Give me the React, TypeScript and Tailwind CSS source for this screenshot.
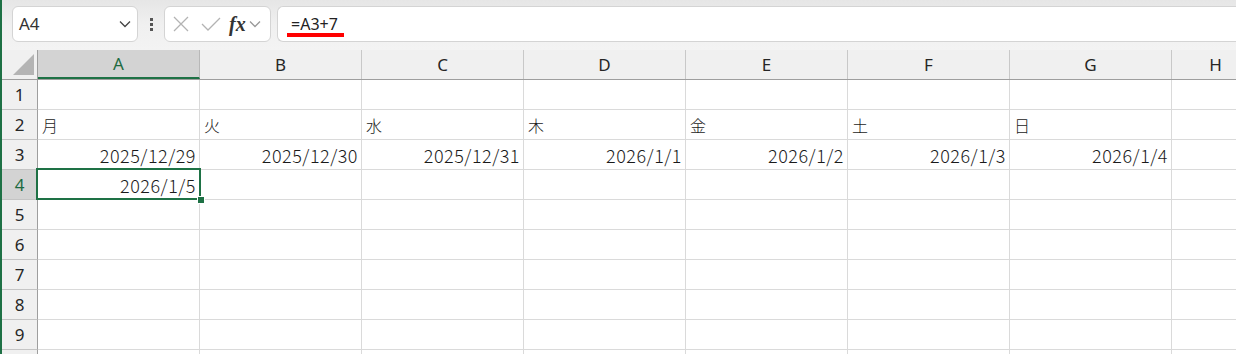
import React from "react";

const cols = ["A", "B", "C", "D", "E", "F", "G", "H"];
type Cell = { t: string; align: "l" | "r" };
const data: Record<number, Record<number, Cell>> = {
  2: {
    0: { t: "月", align: "l" },
    1: { t: "火", align: "l" },
    2: { t: "水", align: "l" },
    3: { t: "木", align: "l" },
    4: { t: "金", align: "l" },
    5: { t: "土", align: "l" },
    6: { t: "日", align: "l" },
  },
  3: {
    0: { t: "2025/12/29", align: "r" },
    1: { t: "2025/12/30", align: "r" },
    2: { t: "2025/12/31", align: "r" },
    3: { t: "2026/1/1", align: "r" },
    4: { t: "2026/1/2", align: "r" },
    5: { t: "2026/1/3", align: "r" },
    6: { t: "2026/1/4", align: "r" },
  },
  4: { 0: { t: "2026/1/5", align: "r" } },
};

const cellFont = { fontFamily: '"Noto Sans CJK JP", "Noto Sans", sans-serif' };

function Chevron({ className }: { className?: string }) {
  return (
    <svg width="12" height="8" viewBox="0 0 12 8" className={className}>
      <path d="M1 1.5 L6 6.5 L11 1.5" fill="none" stroke="currentColor" strokeWidth="1.3" />
    </svg>
  );
}

export default function App() {
  const rows = [1, 2, 3, 4, 5, 6, 7, 8, 9, 10];
  return (
    <div className="w-[1236px] h-[354px] overflow-hidden bg-white border-l-2 border-[#1e7145] relative flex flex-col">
      {/* toolbar */}
      <div className="h-[50px] shrink-0 bg-gradient-to-b from-[#e6e6e6] via-[#f0f0f0] to-[#f3f3f3] flex items-start pt-[6px]">
        <div className="ml-[10px] w-[126px] h-[36px] bg-white border border-[#d4d4d4] rounded-[6px] flex items-center justify-between pl-[6px] pr-[6px]">
          <span className="text-[17px] text-[#333]" style={{ fontFamily: '"Noto Sans", sans-serif' }}>A4</span>
          <Chevron className="text-[#444]" />
        </div>
        <div className="w-[26px] h-[36px] flex flex-col items-center justify-center gap-[2px]">
          <span className="w-[3px] h-[3px] bg-[#555]" />
          <span className="w-[3px] h-[3px] bg-[#555]" />
          <span className="w-[3px] h-[3px] bg-[#555]" />
        </div>
        <div className="w-[107px] h-[36px] bg-white border border-[#d4d4d4] rounded-[6px] flex items-center pl-[8px]">
          <svg width="16" height="16" viewBox="0 0 16 16">
            <path d="M1 1 L15 15 M15 1 L1 15" stroke="#b3b3b3" strokeWidth="1.3" />
          </svg>
          <svg width="20" height="16" viewBox="0 0 20 16" className="ml-[12px]">
            <path d="M1 8 L7 14 L19 2" fill="none" stroke="#b3b3b3" strokeWidth="1.3" />
          </svg>
          <span
            className="ml-[8px] text-[20px] italic font-bold text-[#333] leading-none"
            style={{ fontFamily: '"Liberation Serif", serif' }}
          >
            fx
          </span>
          <Chevron className="ml-[3px] text-[#999]" />
        </div>
        <div className="ml-[6px] flex-1 h-[36px] bg-white border-y border-l border-[#d4d4d4] rounded-l-[6px] relative">
          <span
            className="absolute left-[13px] top-[5px] text-[16px] text-[#222]"
            style={{ fontFamily: '"Noto Sans", sans-serif' }}
          >
            =A3+7
          </span>
          <div className="absolute left-[9px] top-[26px] w-[57px] h-[4px] bg-[#ff0000]" />
        </div>
      </div>

      {/* column header */}
      <div className="h-[30px] shrink-0 flex border-b border-[#9e9e9e] bg-[#f0f0f0]">
        <div className="w-[36px] shrink-0 border-r border-[#9e9e9e] relative">
          <svg width="22" height="22" viewBox="0 0 22 22" className="absolute left-[11px] top-[4px]">
            <path d="M21 0 L21 21 L0 21 Z" fill="#b4b4b4" />
          </svg>
        </div>
        {cols.map((c, i) => (
          <div
            key={c}
            className={`${i === 7 ? "w-[88px]" : "w-[162px]"} shrink-0 flex items-center justify-center text-[17px] ${
              i === 0
                ? "bg-[#d3d3d3] text-[#1e6b41] border-b-2 border-[#1e7145] border-r border-r-[#b8b8b8]"
                : "text-[#262626] border-r border-[#c8c8c8]"
            }`}
            style={{ fontFamily: '"Noto Sans", sans-serif' }}
          >
            {c}
          </div>
        ))}
      </div>

      {/* rows */}
      {rows.map((r) => (
        <div key={r} className="h-[30px] shrink-0 flex">
          <div
            className={`w-[36px] shrink-0 border-r border-b border-r-[#9e9e9e] border-b-[#c4c4c4] flex items-center justify-center text-[17px] ${
              r === 4 ? "bg-[#d3d3d3] text-[#1e6b41]" : "bg-[#f0f0f0] text-[#262626]"
            }`}
            style={{ fontFamily: '"Noto Sans", sans-serif' }}
          >
            {r < 10 ? r : ""}
          </div>
          {cols.map((c, i) => {
            const cell = data[r]?.[i];
            const isDate = cell?.align === "r";
            return (
              <div
                key={c}
                className={`${i === 7 ? "w-[88px]" : "w-[162px]"} shrink-0 border-r border-b border-[#dadada] flex items-center text-[#1a1a1a] font-light ${
                  isDate ? "justify-end pr-[3px] text-[18px] tracking-[0.5px] pt-[1px]" : "justify-start pl-[4px] text-[16px]"
                }`}
                style={cellFont}
              >
                {cell?.t}
              </div>
            );
          })}
        </div>
      ))}

      {/* selection */}
      <div className="absolute left-[34px] top-[168px] w-[165px] h-[32px] border-2 border-[#1e7145] pointer-events-none" />
      <div className="absolute left-[195px] top-[196px] w-[6px] h-[6px] bg-[#1e7145] border border-white box-content" />
    </div>
  );
}
